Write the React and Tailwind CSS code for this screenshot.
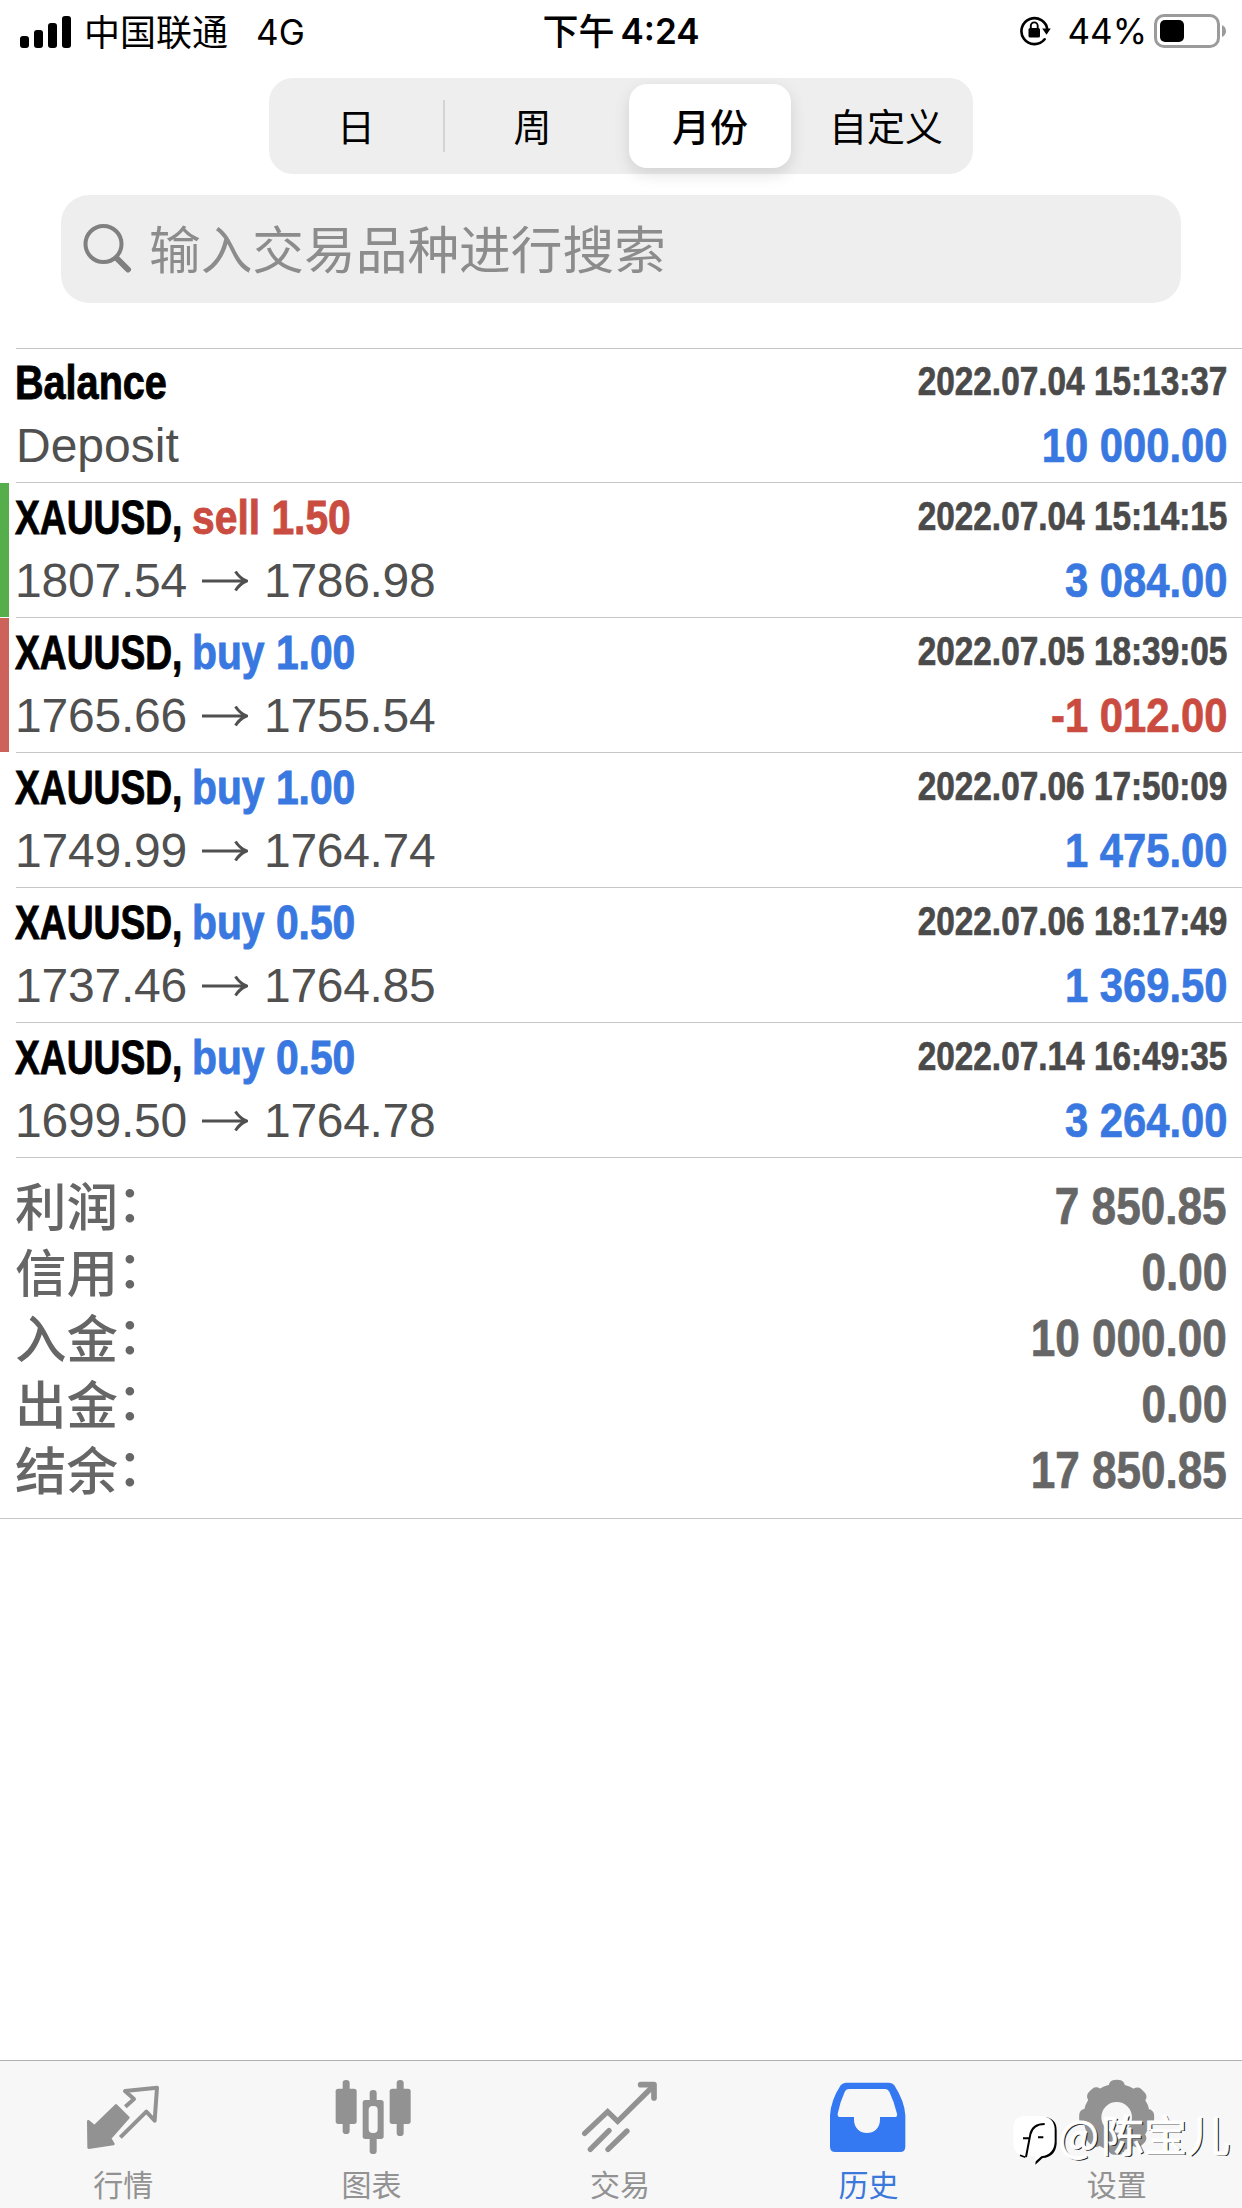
const deals = [
  { title: "Balance", note: "Deposit", time: "2022.07.04 15:13:37", amount: "10 000.00" },
  { symbol: "XAUUSD,", side: "sell", volume: "1.50", open: "1807.54", close: "1786.98", time: "2022.07.04 15:14:15", amount: "3 084.00", bar: "bg-[#55ad4b]" },
  { symbol: "XAUUSD,", side: "buy", volume: "1.00", open: "1765.66", close: "1755.54", time: "2022.07.05 18:39:05", amount: "-1 012.00", bar: "bg-[#cc6259]" },
  { symbol: "XAUUSD,", side: "buy", volume: "1.00", open: "1749.99", close: "1764.74", time: "2022.07.06 17:50:09", amount: "1 475.00" },
  { symbol: "XAUUSD,", side: "buy", volume: "0.50", open: "1737.46", close: "1764.85", time: "2022.07.06 18:17:49", amount: "1 369.50" },
  { symbol: "XAUUSD,", side: "buy", volume: "0.50", open: "1699.50", close: "1764.78", time: "2022.07.14 16:49:35", amount: "3 264.00" },
];

const totals = [
  { label: "利润", value: "7 850.85" },
  { label: "信用", value: "0.00" },
  { label: "入金", value: "10 000.00" },
  { label: "出金", value: "0.00" },
  { label: "结余", value: "17 850.85" },
];

function StatusBar() {
  return (
    <div className="flex h-[78px] shrink-0 items-start pt-[6px] font-['Inter','Noto_Sans_CJK_SC',sans-serif] text-[35px] leading-[50px] text-black">
      <div className="flex w-[500px] items-center pl-[20px]">
        <div className="flex h-[32px] items-end gap-[5px]">
          <div className="h-[12px] w-[9px] rounded-[3px] bg-black" />
          <div className="h-[18px] w-[9px] rounded-[3px] bg-black" />
          <div className="h-[25px] w-[9px] rounded-[3px] bg-black" />
          <div className="h-[32px] w-[9px] rounded-[3px] bg-black" />
        </div>
        <span className="ml-[13px] pt-[2px] text-[36px]">中国联通</span>
        <span className="ml-[28px]">4G</span>
      </div>
      <div className="flex w-[242px] justify-center">
        <span className="pt-px text-[36px] font-medium">下午</span>
        <span className="ml-[6px] font-semibold">4:24</span>
      </div>
      <div className="flex flex-1 items-center justify-end pr-[16px]">
        <svg className="h-[32px] w-[32px]" viewBox="0 0 32 32" fill="none">
          <path d="M25.6 24.3A13 13 0 1 1 28.4 15" stroke="#000" strokeWidth="2.6" strokeLinecap="round" />
          <path d="M23.2 13.6h8.6l-4.3 6.2z" fill="#000" />
          <rect x="9.5" y="13" width="11.5" height="9.5" rx="1.6" fill="#000" />
          <path d="M11.8 13.5v-2.7a3.45 3.45 0 0 1 6.9 0v2.7" stroke="#000" strokeWidth="1.9" />
        </svg>
        <span className="ml-[16px]">44%</span>
        <div className="ml-[7px] flex h-[34px] w-[66px] items-center rounded-[10px] border-[3px] border-[#9b9b9b] pl-[3px]">
          <div className="h-[22px] w-[24px] rounded-[5px] bg-black" />
        </div>
        <svg className="ml-[2px] h-[12px] w-[4px]" viewBox="0 0 4 12">
          <path d="M0 0Q4 2 4 6Q4 10 0 12Z" fill="#9b9b9b" />
        </svg>
      </div>
    </div>
  );
}

function PeriodTabs() {
  return (
    <div className="mx-auto flex h-[96px] w-[704px] shrink-0 items-center rounded-[24px] bg-[#eeeeee] font-['Noto_Sans_CJK_SC',sans-serif] text-[38px] leading-[50px] text-black">
      <div className="w-[174px] pb-[2px] text-center">日</div>
      <div className="h-[52px] w-[2px] bg-[#d4d4d4]" />
      <div className="w-[175px] pb-[2px] text-center">周</div>
      <div className="mr-[8px] ml-[9px] flex h-[84px] w-[162px] items-center justify-center rounded-[18px] bg-white pb-[2px] font-medium shadow-[0_6px_16px_rgba(0,0,0,0.12)]">
        月份
      </div>
      <div className="w-[174px] pb-[2px] text-center">自定义</div>
    </div>
  );
}

function SearchField() {
  return (
    <div className="mx-[61px] mt-[21px] flex h-[108px] shrink-0 items-center rounded-[28px] bg-[#eeeeee] pl-[22px] text-[#8c8c8c]">
      <svg className="h-[50px] w-[50px]" viewBox="0 0 50 50" fill="none" stroke="#808080">
        <circle cx="20.5" cy="20" r="18" strokeWidth="4" />
        <path d="M33.5 34L45 45.5" strokeWidth="6" strokeLinecap="round" />
      </svg>
      <span className="ml-[16px] pb-[4px] font-['Noto_Sans_CJK_SC',sans-serif] text-[51.7px] leading-[60px]">输入交易品种进行搜索</span>
    </div>
  );
}

function DealTitle({ deal }) {
  if (deal.title) {
    return <span className="inline-block origin-left scale-x-[0.825] text-black">{deal.title}</span>;
  }

  return (
    <div className="flex">
      <span className="w-[177px] text-black">
        <span className="inline-block origin-left scale-x-[0.775]">{deal.symbol}</span>
      </span>
      <span className={`origin-left scale-x-[0.85] ${deal.side === "sell" ? "text-[#ca4c41]" : "text-[#3878e0]"}`}>
        {deal.side} {deal.volume}
      </span>
    </div>
  );
}

function DealRow({ deal }) {
  const isLoss = deal.amount.startsWith("-");

  return (
    <div className={`flex w-full ${deal.title ? "h-[134px]" : "h-[135px]"}`}>
      <div className={`mt-px w-[9px] shrink-0 ${deal.bar || ""}`} />
      <div className={`ml-[7px] flex flex-1 justify-between border-t border-[#c6c6c8] pr-[15px] text-[48px] leading-[63px] whitespace-nowrap ${deal.title ? "pt-[2px]" : "pt-[3px]"}`}>
        <div className="text-[#505050]">
          <div className="-ml-px font-bold [-webkit-text-stroke:0.9px_currentColor]">
            <DealTitle deal={deal} />
          </div>
          {deal.note ? (
            <div>{deal.note}</div>
          ) : (
            <div className="-ml-px flex items-center">
              <span className="w-[187px] tracking-[-0.2px]">{deal.open}</span>
              <svg className="mt-[1px] h-[22px] w-[46px]" viewBox="0 0 46 22" fill="none" stroke="#505050" strokeWidth="3">
                <path d="M0 11h44M33.5 1.5Q37.5 8 44.5 11Q37.5 14 33.5 20.5" />
              </svg>
              <span className="ml-[16px] tracking-[-0.3px]">{deal.close}</span>
            </div>
          )}
        </div>
        <div className="text-right font-bold [-webkit-text-stroke:0.7px_currentColor]">
          <div className="h-[63px] origin-right scale-x-[0.834] text-[40px] leading-[61px] text-[#4a4a4a]">{deal.time}</div>
          <div className={`origin-right scale-x-[0.87] ${isLoss ? "text-[#ca4c41]" : "text-[#3878e0]"}`}>{deal.amount}</div>
        </div>
      </div>
    </div>
  );
}

function Totals() {
  return (
    <div className="h-[362px] shrink-0 border-b border-[#c6c6c8]">
      <div className="ml-[16px] flex flex-col border-t border-[#c6c6c8] pt-[16px] pr-[15px] text-[#666666]">
        {totals.map((item) => (
          <div key={item.label} className="flex h-[66px] items-center justify-between">
            <div className="-ml-px flex items-center pb-[7px] font-['Noto_Sans_CJK_SC',sans-serif] text-[51.5px] leading-[59px] font-medium">
              {item.label}
              <span className="-ml-px pb-[8px]">：</span>
            </div>
            <span className="origin-right scale-x-[0.865] text-[51px] leading-[66px] font-bold [-webkit-text-stroke:0.7px_currentColor]">{item.value}</span>
          </div>
        ))}
      </div>
    </div>
  );
}

function QuotesIcon() {
  return (
    <svg className="h-[84px] w-[84px]" viewBox="246 75 252 252" fill="none">
      <path d="M348 166L385 203L330 265L340 282L266 293L265 214L283 229Z" fill="#929292" stroke="#929292" strokeWidth="8" strokeLinejoin="round" />
      <path d="M376 170L402 147L375 123L471 113L464 212L439 185L361 262" stroke="#929292" strokeWidth="12" strokeLinejoin="round" />
    </svg>
  );
}

function ChartIcon() {
  return (
    <svg className="h-[84px] w-[84px]" viewBox="991 75 252 252" fill="#929292">
      <rect x="1026" y="90" width="21" height="162" rx="10" />
      <rect x="1005" y="116" width="63" height="106" rx="8" />
      <rect x="1188" y="90" width="21" height="168" rx="10" />
      <rect x="1167" y="116" width="63" height="106" rx="8" />
      <rect x="1107" y="120" width="21" height="192" rx="10" />
      <rect x="1086" y="150" width="63" height="117" rx="8" />
      <rect x="1104" y="168" width="27" height="81" rx="12" fill="#f7f7f7" />
    </svg>
  );
}

function TradeIcon() {
  return (
    <svg className="h-[84px] w-[84px]" viewBox="117 75 252 252" fill="none" stroke="#929292" strokeLinecap="round" strokeLinejoin="round">
      <path d="M134 250L203 185L233 214L340 108" strokeWidth="16" strokeLinejoin="miter" />
      <path d="M302 104H342V144" strokeWidth="17" />
      <path d="M151 298L207 242M204 298L261 243" strokeWidth="16" />
    </svg>
  );
}

function HistoryIcon() {
  return (
    <svg className="h-[84px] w-[84px]" viewBox="861 75 252 252">
      <path
        fillRule="evenodd"
        fill="#3478f2"
        d="M918 98H1047Q1058 98 1063 106Q1094 155 1096 196V290Q1096 306 1080 306H886Q870 306 870 290V196Q873 150 902 106Q908 98 918 98ZM927 117Q919 117 915 124Q900 156 893 191Q892 201 901 201H942V209C942 262 1020 262 1020 209V201H1064Q1073 201 1071 191Q1063 156 1048 125Q1044 117 1036 117Z"
      />
    </svg>
  );
}

function SettingsIcon() {
  return (
    <svg className="h-[84px] w-[84px]" viewBox="347 75 252 252" fill="none">
      <circle cx="469" cy="202" r="73" stroke="#929292" strokeWidth="54" />
      <circle cx="469" cy="202" r="95" stroke="#929292" strokeWidth="35" strokeLinecap="round" strokeDasharray="14 60.61" strokeDashoffset="7" transform="rotate(-90 469 202)" />
    </svg>
  );
}

const tabs = [
  { label: "行情", icon: QuotesIcon },
  { label: "图表", icon: ChartIcon },
  { label: "交易", icon: TradeIcon },
  { label: "历史", icon: HistoryIcon, active: true },
  { label: "设置", icon: SettingsIcon },
];

function TabBar() {
  return (
    <nav className="relative mt-auto flex h-[148px] shrink-0 border-t border-[#b2b2b2] bg-[#f7f7f7] pt-[14px] font-['Noto_Sans_CJK_SC',sans-serif]">
      {tabs.map(({ label, icon: Icon, active }) => (
        <div key={label} className={`flex flex-1 flex-col items-center ${active ? "text-[#3a78dc]" : "text-[#929292]"}`}>
          <Icon />
          <span className="mt-[2px] pr-[2px] text-[30px] leading-[44px]">{label}</span>
        </div>
      ))}
      <Watermark />
    </nav>
  );
}

function Watermark() {
  return (
    <div className="absolute right-[12px] bottom-[43px] flex items-center text-white">
      <svg className="mt-[14px] h-[50px] w-[46px]" viewBox="144 204 138 150">
        <path d="M186 210H238Q278 212 278 250V290Q274 330 236 333L214 353L216 330L240 318Q266 316 270 290V240Q262 214 238 212Z" fill="#000" />
        <path d="M182 207H232Q270 210 272 245V285Q270 322 232 328L212 346L214 328H180Q150 322 148 290V240Q150 210 182 207Z" fill="#fff" />
        <path d="M186 330L199 262Q206 231 242 231M177 274H198M222 271H238" stroke="#000" strokeWidth="6" fill="none" />
        <path d="M168 325L184 331" stroke="#000" strokeWidth="5" />
      </svg>
      <span className="font-['Noto_Sans_CJK_SC',sans-serif] text-[43px] leading-[50px] [text-shadow:1.5px_1px_0_#222] [-webkit-text-stroke:0.8px_#fff]">
        <span className="mr-[2px]">@</span>陈宝儿
      </span>
    </div>
  );
}

export default function App() {
  return (
    <div className="flex h-[2208px] w-[1242px] flex-col overflow-hidden bg-white font-['Liberation_Sans','Noto_Sans_CJK_SC',sans-serif]">
      <StatusBar />
      <PeriodTabs />
      <SearchField />
      <div className="mt-[45px] flex shrink-0 flex-col">
        {deals.map((deal) => (
          <DealRow key={deal.time} deal={deal} />
        ))}
      </div>
      <Totals />
      <TabBar />
    </div>
  );
}
